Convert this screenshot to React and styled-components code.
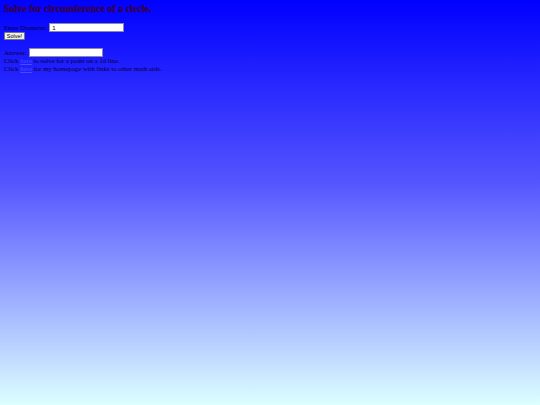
import React, { useState } from "react";
import styled, { createGlobalStyle } from "styled-components";

const GlobalStyle = createGlobalStyle`
  html, body {
    margin: 0;
    padding: 0;
    height: 100%;
  }
  body {
    background: linear-gradient(to bottom, #0000ff 0%, #5555ff 45%, #ddffff 100%);
    background-attachment: fixed;
    min-height: 405px;
  }
`;

const Page = styled.div`
  padding: 3px 4px;
  font-family: "Liberation Serif", "Times New Roman", serif;
  font-size: 6.75px;
  color: #0a0030;
`;

const Title = styled.h3`
  margin: 0 0 9px;
  font-family: "Liberation Serif", "Times New Roman", serif;
  font-size: 10px;
  line-height: 11px;
  font-weight: 700;
  color: #330055;
  -webkit-text-stroke: 0.45px #330055;
`;

const Row = styled.div`
  display: flex;
  align-items: center;
  height: ${({ h }) => h || 9}px;
  margin-top: ${({ mt }) => mt || 0}px;
  gap: 2px;
`;

const Field = styled.input`
  box-sizing: border-box;
  width: ${({ w }) => w}px;
  height: 9px;
  padding: 0 2px;
  border: 1px solid #8a8aa8;
  background: #ffffff;
  font-family: "Liberation Sans", Arial, sans-serif;
  font-size: 6px;
  color: #000;
  outline: none;
`;

const SolveButton = styled.button`
  box-sizing: border-box;
  height: 8px;
  width: 21px;
  padding: 0;
  border: 1px solid #767676;
  border-radius: 1px;
  background: #efefef;
  font-family: "Liberation Sans", Arial, sans-serif;
  font-size: 5.5px;
  line-height: 6px;
  color: #000;
`;

const Line = styled.div`
  line-height: 8px;
  white-space: nowrap;
`;

const Link = styled.a`
  color: #4a4aff;
  text-decoration: underline;
`;

export default function App() {
  const [diameter, setDiameter] = useState("1");
  const [answer, setAnswer] = useState("");

  const solve = () => {
    const d = parseFloat(diameter);
    setAnswer(isNaN(d) ? "" : String(Math.PI * d));
  };

  return (
    <>
      <GlobalStyle />
      <Page>
        <Title>Solve for circumference of a circle.</Title>
        <Row>
          Enter Diameter:
          <Field w={75} value={diameter} onChange={(e) => setDiameter(e.target.value)} />
        </Row>
        <Row h={8}>
          <SolveButton onClick={solve}>Solve!</SolveButton>
        </Row>
        <Row mt={8}>
          Answer:
          <Field w={74} value={answer} readOnly />
        </Row>
        <Line>
          Click <Link href="#">here</Link> to solve for a point on a 1d line.
        </Line>
        <Line>
          Click <Link href="#">here</Link> for my homepage with links to other math aids.
        </Line>
      </Page>
    </>
  );
}
